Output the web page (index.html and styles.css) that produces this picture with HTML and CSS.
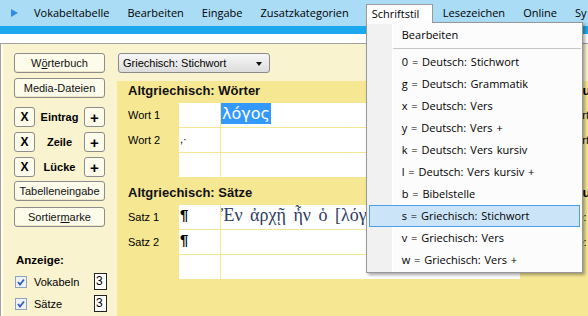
FILE: index.html
```html
<!DOCTYPE html>
<html lang="de">
<head>
    <meta charset="UTF-8">
    <title>Vokabeltabelle</title>
    <link rel="stylesheet" href="styles.css">
</head>
<body>
    <div class="menubar">
        <span class="play"></span>
        <span class="mi">Vokabeltabelle</span><span class="sep"></span>
        <span class="mi">Bearbeiten</span><span class="sep"></span>
        <span class="mi">Eingabe</span><span class="sep"></span>
        <span class="mi">Zusatzkategorien</span>
        <span class="mi open">Schriftstil
            <div class="dropdown">
                <div class="dd-item">Bearbeiten</div>
                <div class="dd-sep"></div>
                <div class="dd-item">0 = Deutsch: Stichwort</div>
                <div class="dd-item">g = Deutsch: Grammatik</div>
                <div class="dd-item">x = Deutsch: Vers</div>
                <div class="dd-item">y = Deutsch: Vers +</div>
                <div class="dd-item">k = Deutsch: Vers kursiv</div>
                <div class="dd-item">l = Deutsch: Vers kursiv +</div>
                <div class="dd-item">b = Bibelstelle</div>
                <div class="dd-item hot">s = Griechisch: Stichwort</div>
                <div class="dd-item">v = Griechisch: Vers</div>
                <div class="dd-item">w = Griechisch: Vers +</div>
            </div>
        </span>
        <span class="mi">Lesezeichen</span><span class="sep"></span>
        <span class="mi">Online</span><span class="sep"></span>
        <span class="mi">Sy</span>
    </div>
    <div class="strip"></div>
    <div class="band"></div>

    <div class="body">
        <aside class="side">
            <button class="btn">W<u>ö</u>rterbuch</button>
            <button class="btn">Media-Dateien</button>
            <div class="edit-row">
                <button class="sq">X</button><b>Eintrag</b><button class="sq plus">+</button>
            </div>
            <div class="edit-row">
                <button class="sq">X</button><b>Zeile</b><button class="sq plus">+</button>
            </div>
            <div class="edit-row">
                <button class="sq">X</button><b>Lücke</b><button class="sq plus">+</button>
            </div>
            <button class="btn gap">Tabelleneingabe</button>
            <button class="btn">Sortier<u>m</u>arke</button>
            <div class="show-title">Anzeige:</div>
            <div class="show-row">
                <svg class="cb" width="12" height="12" viewBox="0 0 12 12"><rect x="0.5" y="0.5" width="11" height="11" fill="#eef2f8" stroke="#8ea3bd"/><path d="M3 6l2 2.5 4-5" fill="none" stroke="#2f5fc4" stroke-width="1.8"/></svg>
                <span>Vokabeln</span><span class="num">3</span>
            </div>
            <div class="show-row">
                <svg class="cb" width="12" height="12" viewBox="0 0 12 12"><rect x="0.5" y="0.5" width="11" height="11" fill="#eef2f8" stroke="#8ea3bd"/><path d="M3 6l2 2.5 4-5" fill="none" stroke="#2f5fc4" stroke-width="1.8"/></svg>
                <span>Sätze</span><span class="num">3</span>
            </div>
        </aside>

        <main class="main">
            <div class="select">Griechisch: Stichwort<span class="arrow"></span></div>
            <div class="sheet">
                <div class="grid">
                    <div class="title">Altgriechisch: Wörter</div>
                    <div class="title-r">Struktur</div>
                    <div class="lbl">Wort 1</div><div class="cell"></div><div class="cell"><span class="sel">λόγος</span></div><div class="lbl-r">Wort</div>
                    <div class="lbl">Wort 2</div><div class="cell mark">,·</div><div class="cell"></div><div class="lbl-r">Wort</div>
                    <div class="lbl"></div><div class="cell"></div><div class="cell"></div><div class="lbl-r"></div>
                </div>
                <div class="grid second">
                    <div class="title">Altgriechisch: Sätze</div>
                    <div class="title-r">Struktur</div>
                    <div class="lbl">Satz 1</div><div class="cell pil">¶</div><div class="cell verse">Ἐν ἀρχῇ ἦν ὁ [λόγος]</div><div class="lbl-r colon">Stelle:</div>
                    <div class="lbl">Satz 2</div><div class="cell pil">¶</div><div class="cell"></div><div class="lbl-r colon">Stelle:</div>
                    <div class="lbl"></div><div class="cell"></div><div class="cell"></div><div class="lbl-r"></div>
                </div>
            </div>
        </main>
    </div>
</body>
</html>
```

FILE: styles.css
```css
:root {
    --menu-bg: #aadcf6;
    --strip: #1ca8ec;
    --cream: #f9f3cf;
    --yellow: #f6e793;
}

* {
    box-sizing: border-box;
}

body {
    margin: 0;
    width: 588px;
    height: 316px;
    overflow: hidden;
    font-family: "Liberation Sans", Arial, sans-serif;
    font-size: 11px;
    color: #000;
    background: var(--cream);
}

/* menu bar */

.menubar {
    display: flex;
    align-items: center;
    height: 26px;
    background: var(--menu-bg);
    font-family: "Open Sans", sans-serif;
    font-size: 11px;
    color: #000;
    white-space: nowrap;
}

.play {
    width: 0;
    height: 0;
    margin: 0 7px 0 11px;
    border-left: 7px solid #2f8ce4;
    border-top: 4px solid transparent;
    border-bottom: 4px solid transparent;
}

.mi {
    padding: 0 9px;
    line-height: 26px;
}

.sep {
    width: 1px;
    height: 15px;
    background: #e8c65e;
}

.mi.open {
    position: relative;
    align-self: flex-start;
    width: 67px;
    flex-shrink: 0;
    margin: 4px 1px 0 8px;
    height: 19px;
    padding: 0 0 0 5px;
    line-height: 17px;
    background: #fff;
    border: 1px solid #9a9a9a;
    border-bottom: none;
    z-index: 5;
}

.mi.open::after {
    content: "";
    position: absolute;
    left: 0;
    right: 0;
    top: 17px;
    height: 2px;
    background: #fcfcfc;
    z-index: 3;
}

.dropdown {
    position: absolute;
    top: 17px;
    left: -1px;
    width: 217px;
    padding: 1px 0;
    font-size: 11px;
    word-spacing: 1px;
    background: linear-gradient(to right, #f1f1f1 25px, #fff 25px, #fff 26px, #fcfcfc 26px);
    border: 1px solid #979797;
    box-shadow: 2px 2px 3px rgba(0, 0, 0, 0.35);
    z-index: 2;
}

.dd-item {
    height: 22px;
    margin: 0 2px;
    padding-left: 32px;
    border: 1px solid transparent;
    line-height: 20px;
    color: #000;
}

.dd-item.hot {
    background: #cce4f8;
    border-color: #4b9fe8;
}

.dd-sep {
    height: 5px;
    margin: 0 1px 0 26px;
    border-top: 2px solid transparent;
    border-bottom: 2px solid transparent;
    background: #c6c6c6;
    background-clip: content-box;
}

.strip {
    height: 8px;
    background: var(--strip);
}

.band {
    height: 10px;
    background: #fff;
    border-bottom: 1px solid #a3a3a3;
}

/* window body */

.body {
    display: flex;
    height: 272px;
    border-left: 1px solid #a0a0a0;
}

.side {
    width: 109px;
    padding: 9px 0 0 11px;
    border-left: 2px solid #fffdf0;
    display: flex;
    flex-direction: column;
    flex-shrink: 0;
}

.btn {
    width: 91px;
    height: 20px;
    padding: 0;
    margin-bottom: 5px;
    font-family: inherit;
    font-size: 11px;
    color: #111;
    background: #fdfbea;
    border: 1px solid #8c8c8c;
    border-radius: 3px;
    box-shadow: inset 0 -1px 0 #ece6c6;
}

.btn.gap {
    margin-top: 3px;
    margin-bottom: 6px;
}

.edit-row {
    display: flex;
    align-items: center;
    justify-content: space-between;
    width: 91px;
    height: 20px;
    margin-top: 4px;
    margin-bottom: 1px;
}

.edit-row b {
    font-size: 11px;
}

.sq {
    width: 21px;
    height: 20px;
    padding: 0;
    font-family: inherit;
    font-size: 12px;
    font-weight: bold;
    color: #000;
    background: #fdfbea;
    border: 1px solid #8c8c8c;
    border-radius: 3px;
}

.sq.plus {
    font-size: 15px;
    padding-top: 2px;
    line-height: 16px;
}

.show-title {
    margin-top: 21px;
    margin-left: 2px;
    font-size: 11.5px;
    font-weight: bold;
    line-height: 14px;
}

.show-row {
    display: flex;
    align-items: center;
    height: 17px;
    margin-top: 6px;
    margin-left: 1px;
    width: 91px;
    font-size: 11px;
}

.show-row + .show-row {
    margin-top: 5px;
}

.cb {
    margin-right: 7px;
}

.num {
    margin-left: auto;
    width: 13px;
    height: 17px;
    margin-right: -1px;
    padding-left: 1px;
    background: #fff;
    border: 1px solid #222;
    font-size: 12px;
    line-height: 15px;
}

/* main area */

.main {
    flex: 1;
    padding-top: 9px;
    display: flex;
    flex-direction: column;
    min-width: 0;
}

.select {
    position: relative;
    width: 152px;
    height: 20px;
    margin-left: 8px;
    padding-left: 4px;
    line-height: 18px;
    font-size: 11px;
    background: linear-gradient(#f7f7f7, #dcdcdc);
    border: 1px solid #8a8a8a;
    border-radius: 3px;
}

.arrow {
    position: absolute;
    right: 7px;
    top: 8px;
    border-top: 4px solid #111;
    border-left: 3.5px solid transparent;
    border-right: 3.5px solid transparent;
}

.sheet {
    flex: 1;
    margin: 8px 0 0 7px;
    background: var(--yellow);
}

.grid {
    display: grid;
    grid-template-columns: 61px 41px 299px 1fr;
    grid-template-rows: 21px repeat(3, 24px);
    column-gap: 1px;
    row-gap: 1px;
}

.grid.second {
    margin-top: 6px;
}

.title {
    grid-column: 1 / 4;
    padding-left: 11px;
    font-size: 13px;
    font-weight: bold;
    line-height: 19px;
    color: #111;
}

.title-r {
    padding-left: 24px;
    font-size: 13px;
    font-weight: bold;
    line-height: 19px;
    white-space: nowrap;
}

.lbl,
.lbl-r {
    padding-left: 11px;
    line-height: 24px;
    font-size: 11px;
    white-space: nowrap;
}

.lbl-r {
    padding-left: 45px;
}

.lbl-r.colon {
    padding-left: 35px;
}

.cell {
    background: #fff;
    overflow: hidden;
    white-space: nowrap;
}

.sel {
    display: inline-block;
    height: 21px;
    padding: 0 1px;
    background: #3399ff;
    color: #fff;
    font-family: "DejaVu Sans", sans-serif;
    font-size: 16px;
    line-height: 21px;
}

.mark {
    padding: 2px 0 0 1px;
    font-size: 11px;
    line-height: 18px;
}

.pil {
    padding-left: 1px;
    font-size: 15px;
    font-weight: bold;
    line-height: 20px;
}

.verse {
    font-family: "Liberation Serif", "DejaVu Serif", serif;
    font-size: 18px;
    line-height: 20px;
    word-spacing: 3px;
    color: #2d3b5e;
}
```
